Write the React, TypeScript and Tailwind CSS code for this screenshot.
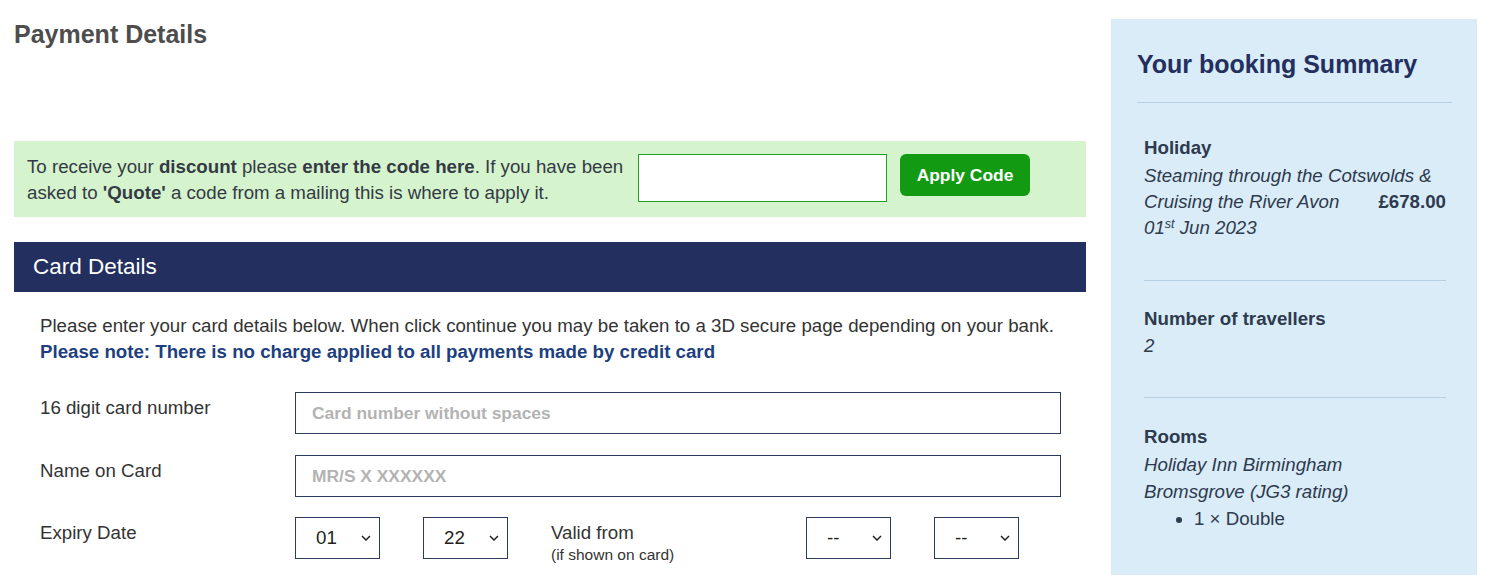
import React from 'react';

const font = { fontFamily: '"Liberation Sans", Arial, sans-serif' };

function Chevron() {
  return (
    <svg className="pointer-events-none absolute right-[8px] top-1/2 -translate-y-1/2" width="10" height="6" viewBox="0 0 10 6" fill="none">
      <path d="M1 1l4 4 4-4" stroke="#222" strokeWidth="1.5" />
    </svg>
  );
}

function Select({ value }: { value: string }) {
  return (
    <div className="relative w-[85px] h-[42px] border border-[#2d3a60] bg-white flex items-center pl-[20px] text-[18.7px] text-[#222]">
      {value}
      <Chevron />
    </div>
  );
}

export default function App() {
  return (
    <div className="flex bg-white text-[#333] h-[575px] overflow-hidden" style={font}>
      <div className="w-[1072px] ml-[14px] shrink-0">
        <h1 className="mt-[20px] text-[25px] leading-[28px] font-bold text-[#4d4d4d]">Payment Details</h1>

        <div className="mt-[93px] bg-[#d5f3cc] h-[76px] flex items-start pt-[13px] pl-[13px]">
          <p className="w-[600px] text-[18.7px] leading-[26px] text-[#333a46]">
            To receive your <b>discount</b> please <b>enter the code here</b>. If you have been asked to <b>'Quote'</b> a code from a mailing this is where to apply it.
          </p>
          <input className="ml-[11px] w-[249px] h-[48px] border border-[#22a022] bg-white outline-none" />
          <button className="ml-[13px] w-[130px] h-[42px] rounded-[6px] bg-[#139a13] text-white font-bold text-[17.4px]">Apply Code</button>
        </div>

        <div className="mt-[25px] h-[50px] bg-[#232f5e] flex items-center pl-[19px] text-white text-[22.5px]">Card Details</div>

        <div className="pl-[26px] pt-[21px]">
          <p className="text-[18.7px] leading-[26px]">
            Please enter your card details below. When click continue you may be taken to a 3D secure page depending on your bank.
            <br />
            <b className="text-[#1d3f80]">Please note: There is no charge applied to all payments made by credit card</b>
          </p>

          <div className="mt-[27px] flex items-start">
            <div className="w-[255px] pt-[3px] text-[18.7px] leading-[26px]">16 digit card number</div>
            <div className="w-[766px] h-[42px] border border-[#2d3a60] flex items-center pl-[16px] text-[17.4px] font-bold text-[#b3b3b3]">Card number without spaces</div>
          </div>
          <div className="mt-[21px] flex items-start">
            <div className="w-[255px] pt-[3px] text-[18.7px] leading-[26px]">Name on Card</div>
            <div className="w-[766px] h-[42px] border border-[#2d3a60] flex items-center pl-[16px] text-[17.4px] font-bold text-[#b3b3b3]">MR/S X XXXXXX</div>
          </div>
          <div className="mt-[20px] flex items-start">
            <div className="w-[255px] pt-[3px] text-[18.7px] leading-[26px]">Expiry Date</div>
            <Select value="01" />
            <div className="ml-[43px]"><Select value="22" /></div>
            <div className="ml-[43px] w-[255px] pt-[3px]">
              <div className="text-[18.7px] leading-[26px]">Valid from</div>
              <div className="text-[15.5px] leading-[18px]">(if shown on card)</div>
            </div>
            <Select value="--" />
            <div className="ml-[43px]"><Select value="--" /></div>
          </div>
        </div>
      </div>

      <aside className="ml-[25px] mt-[19px] w-[366px] shrink-0 bg-[#d9ecf8] pl-[26px] pr-[25px] pt-[31px] text-[#2e3a4d]">
        <h2 className="text-[25px] leading-[28px] font-bold text-[#232f5e]">Your booking Summary</h2>
        <div className="mt-[24px] border-t border-[#b5cfe3]" />

        <div className="pl-[7px] pr-[6px]">
          <div className="pt-[32px] pb-[39px] border-b border-[#b5cfe3] text-[18.7px]">
            <div className="font-bold leading-[26px]">Holiday</div>
            <div className="italic leading-[26px] mt-[2px]">Steaming through the Cotswolds &amp;</div>
            <div className="flex justify-between leading-[26px]">
              <span className="italic">Cruising the River Avon</span>
              <b>£678.00</b>
            </div>
            <div className="italic leading-[26px]">01<sup className="text-[12.5px]">st</sup> Jun 2023</div>
          </div>

          <div className="pt-[25px] pb-[37px] border-b border-[#b5cfe3] text-[18.7px]">
            <div className="font-bold leading-[26px]">Number of travellers</div>
            <div className="italic leading-[28px]">2</div>
          </div>

          <div className="pt-[26px] text-[18.7px]">
            <div className="font-bold leading-[26px]">Rooms</div>
            <div className="italic leading-[27px] mt-[1px]">Holiday Inn Birmingham<br />Bromsgrove (JG3 rating)</div>
            <ul className="list-disc pl-[50px] leading-[27px]">
              <li>1 × Double</li>
            </ul>
          </div>
        </div>
      </aside>
    </div>
  );
}
